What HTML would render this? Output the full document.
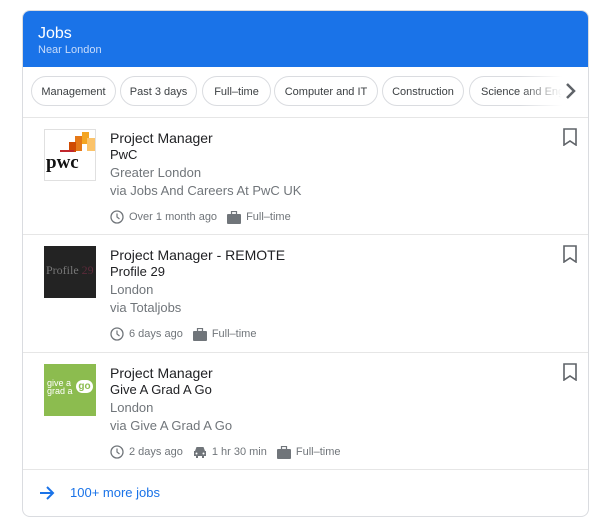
<!DOCTYPE html>
<html><head><style>
body{margin:0;background:#fff;font-family:"Liberation Sans",Arial,sans-serif;width:602px;height:524px;overflow:hidden;position:relative}
.card{position:absolute;left:22px;top:10px;width:567px;height:507px;border:1px solid #dadce0;border-radius:8px;overflow:hidden;box-sizing:border-box}
.hdr{background:#1a73e8;height:56px;color:#fff;position:relative}
.hdr .t{position:absolute;left:15px;top:14px;font-size:16px}
.hdr .s{position:absolute;left:15px;top:33px;font-size:11px;color:#c8dcfb}
.chips{position:absolute;top:65px;left:0;width:567px;height:40px;white-space:nowrap;overflow:hidden}
.chip{position:absolute;top:0;height:30px;border:1px solid #dadce0;border-radius:16px;font-size:11px;color:#3c4043;line-height:30px;text-align:center;box-sizing:border-box}
.fade{position:absolute;right:0;top:0;width:70px;height:32px;background:linear-gradient(to right,rgba(255,255,255,0),#fff 60%)}
.div{position:absolute;left:0;width:567px;height:1px;background:#e6e6e6}
.item{position:absolute;left:0;width:567px;height:117px}
.logo{position:absolute;left:21px;top:11px;width:52px;height:52px;box-sizing:border-box}
.ln{position:absolute;left:87px;font-size:14px;color:#202124;white-space:nowrap}
.co{font-size:13px}
.gr{color:#70757a;font-size:13px}
.meta{position:absolute;left:87px;top:92px;font-size:11px;color:#70757a;display:flex;align-items:center;white-space:nowrap}
.meta svg{margin-right:5px}
.bm{position:absolute;right:12px;top:10px}
.more{position:absolute;left:0;top:458px;width:567px;height:49px}
</style></head><body>
<div class="card">
<div class="hdr"><div class="t">Jobs</div><div class="s">Near London</div></div>
<div class="chips">
<div class="chip" style="left:8px;width:85px">Management</div>
<div class="chip" style="left:97px;width:77px">Past 3 days</div>
<div class="chip" style="left:179px;width:69px">Full–time</div>
<div class="chip" style="left:251px;width:104px">Computer and IT</div>
<div class="chip" style="left:359px;width:82px">Construction</div>
<div class="chip" style="left:446px;width:130px;text-align:left;padding-left:11px">Science and Engineering</div>
<div class="fade"></div>
<svg style="position:absolute;left:541px;top:5px" width="14" height="20" viewBox="0 0 14 20"><path d="M3 3l7 7-7 7" stroke="#5f6368" stroke-width="2.5" fill="none"/></svg>
</div>
<div class="div" style="top:106px"></div>

<div class="item" style="top:107px">
<div class="logo" style="border:1px solid #e0e0e0;background:#fff">
<div style="position:absolute;left:37px;top:2px;width:7px;height:12px;background:#f4a522"></div>
<div style="position:absolute;left:30px;top:6px;width:7px;height:15px;background:#e57918"></div>
<div style="position:absolute;left:42px;top:8px;width:8px;height:13px;background:#fbc36a"></div>
<div style="position:absolute;left:24px;top:12px;width:7px;height:10px;background:#d04a02"></div>
<div style="position:absolute;left:15px;top:20px;width:14px;height:2px;background:#c1272d"></div>
<div style="position:absolute;left:1px;top:22px;font:bold 19px 'Liberation Serif',serif;color:#111">pwc</div>
</div>
<div class="ln" style="top:12px">Project Manager</div>
<div class="ln co" style="top:29px">PwC</div>
<div class="ln gr" style="top:47px">Greater London</div>
<div class="ln gr" style="top:65px">via Jobs And Careers At PwC UK</div>
<div class="meta"><svg width="14" height="14" viewBox="0 0 14 14"><circle cx="7" cy="7" r="6" stroke="#70757a" stroke-width="1.3" fill="none"/><path d="M7 3.5V7l2.5 2" stroke="#70757a" stroke-width="1.2" fill="none"/></svg>Over 1 month ago<svg style="margin-left:10px" width="14" height="13" viewBox="0 0 14 13"><rect x="0" y="3" width="14" height="10" rx="1" fill="#70757a"/><rect x="4.5" y="0.5" width="5" height="3" stroke="#70757a" stroke-width="1.2" fill="none"/></svg>Full–time</div>
<svg class="bm" width="16" height="18" viewBox="0 0 16 18"><path d="M2 1h12v16l-6-4-6 4z" stroke="#5f6368" stroke-width="1.6" fill="none"/></svg>
</div>
<div class="div" style="top:223px"></div>

<div class="item" style="top:224px">
<div class="logo" style="background:#232323;top:11px"><div style="position:absolute;left:2px;top:17px;font:12px 'Liberation Serif',serif;color:#777">Profile <span style="color:#5b2a3a">29</span></div></div>
<div class="ln" style="top:12px">Project Manager - REMOTE</div>
<div class="ln co" style="top:29px">Profile 29</div>
<div class="ln gr" style="top:47px">London</div>
<div class="ln gr" style="top:65px">via Totaljobs</div>
<div class="meta"><svg width="14" height="14" viewBox="0 0 14 14"><circle cx="7" cy="7" r="6" stroke="#70757a" stroke-width="1.3" fill="none"/><path d="M7 3.5V7l2.5 2" stroke="#70757a" stroke-width="1.2" fill="none"/></svg>6 days ago<svg style="margin-left:10px" width="14" height="13" viewBox="0 0 14 13"><rect x="0" y="3" width="14" height="10" rx="1" fill="#70757a"/><rect x="4.5" y="0.5" width="5" height="3" stroke="#70757a" stroke-width="1.2" fill="none"/></svg>Full–time</div>
<svg class="bm" width="16" height="18" viewBox="0 0 16 18"><path d="M2 1h12v16l-6-4-6 4z" stroke="#5f6368" stroke-width="1.6" fill="none"/></svg>
</div>
<div class="div" style="top:341px"></div>

<div class="item" style="top:342px">
<div class="logo" style="background:#8cbc4f">
<div style="position:absolute;left:3px;top:15px;font:9px/8px 'Liberation Sans',sans-serif;color:#fff">give a<br>grad a</div>
<div style="position:absolute;left:32px;top:16px;width:17px;height:13px;background:#fff;border-radius:7px;font:bold 10px/13px 'Liberation Sans';color:#8cbc4f;text-align:center">go</div>
</div>
<div class="ln" style="top:12px">Project Manager</div>
<div class="ln co" style="top:29px">Give A Grad A Go</div>
<div class="ln gr" style="top:47px">London</div>
<div class="ln gr" style="top:65px">via Give A Grad A Go</div>
<div class="meta"><svg width="14" height="14" viewBox="0 0 14 14"><circle cx="7" cy="7" r="6" stroke="#70757a" stroke-width="1.3" fill="none"/><path d="M7 3.5V7l2.5 2" stroke="#70757a" stroke-width="1.2" fill="none"/></svg>2 days ago<svg style="margin-left:10px" width="14" height="12" viewBox="0 0 14 12"><path d="M2 5l1.5-4h7L12 5h1v5h-2v2H9v-2H5v2H3v-2H1V5z" fill="#70757a"/><circle cx="3.5" cy="7.5" r="1" fill="#fff"/><circle cx="10.5" cy="7.5" r="1" fill="#fff"/></svg>1 hr 30 min<svg style="margin-left:10px" width="14" height="13" viewBox="0 0 14 13"><rect x="0" y="3" width="14" height="10" rx="1" fill="#70757a"/><rect x="4.5" y="0.5" width="5" height="3" stroke="#70757a" stroke-width="1.2" fill="none"/></svg>Full–time</div>
<svg class="bm" width="16" height="18" viewBox="0 0 16 18"><path d="M2 1h12v16l-6-4-6 4z" stroke="#5f6368" stroke-width="1.6" fill="none"/></svg>
</div>
<div class="div" style="top:458px"></div>

<div class="more">
<svg style="position:absolute;left:16px;top:16px" width="16" height="16" viewBox="0 0 16 16"><path d="M1 8h13M8 2l6 6-6 6" stroke="#1a73e8" stroke-width="2" fill="none"/></svg>
<div style="position:absolute;left:47px;top:16px;font-size:13px;color:#1a73e8">100+ more jobs</div>
</div>
</div>
</body></html>
